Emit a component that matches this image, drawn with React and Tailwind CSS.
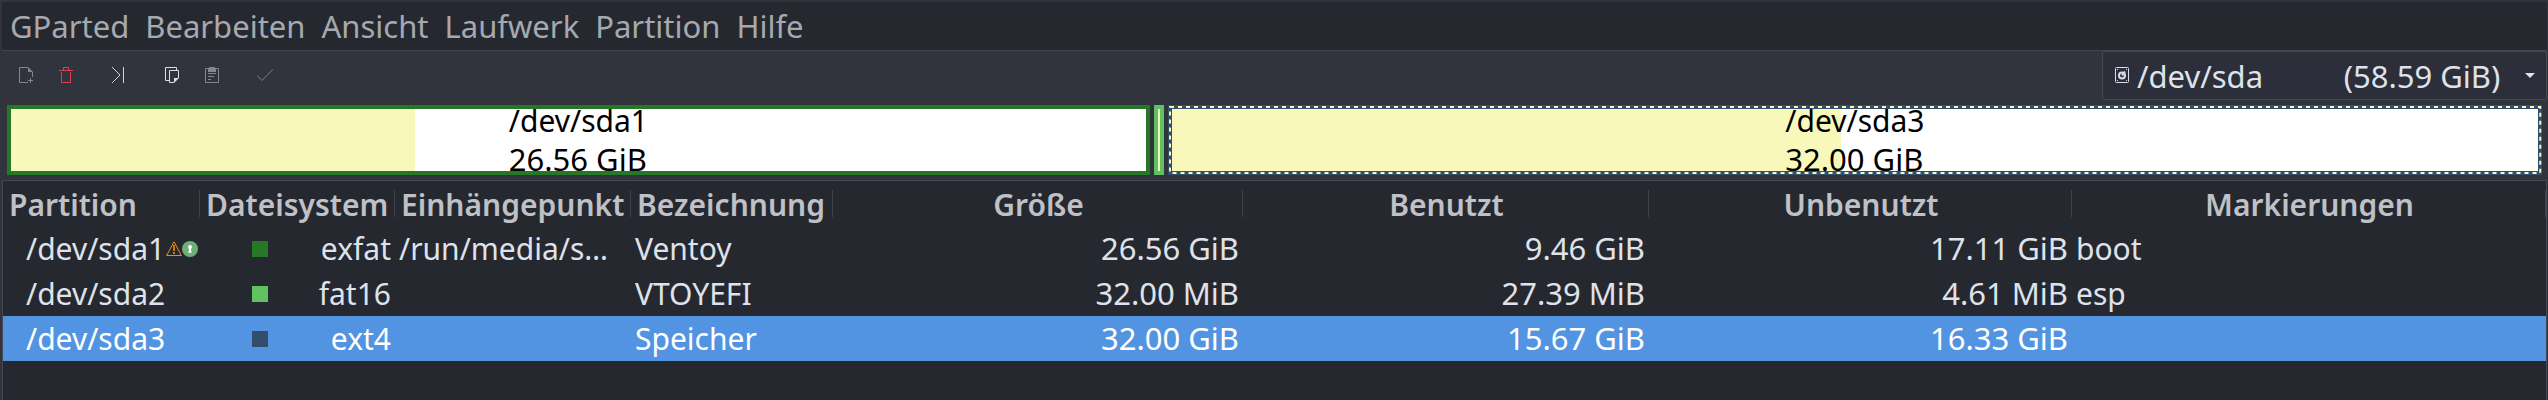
import { useState } from "react";

const MENU = ["GParted", "Bearbeiten", "Ansicht", "Laufwerk", "Partition", "Hilfe"];

const PARTITIONS = [
  { name: "/dev/sda1", fs: "exfat", swatch: "bg-[#267726]", mount: "/run/media/s…", label: "Ventoy", size: "26.56 GiB", used: "9.46 GiB", unused: "17.11 GiB", flags: "boot", mounted: true },
  { name: "/dev/sda2", fs: "fat16", swatch: "bg-[#5fc262]", mount: "", label: "VTOYEFI", size: "32.00 MiB", used: "27.39 MiB", unused: "4.61 MiB", flags: "esp" },
  { name: "/dev/sda3", fs: "ext4", swatch: "bg-[#314e6c]", mount: "", label: "Speicher", size: "32.00 GiB", used: "15.67 GiB", unused: "16.33 GiB", flags: "" },
];

const COLUMNS = [
  { title: "Partition", width: "w-[197px]", align: "justify-start" },
  { title: "Dateisystem", width: "w-[195px]", align: "justify-start" },
  { title: "Einhängepunkt", width: "w-[236px]", align: "justify-start" },
  { title: "Bezeichnung", width: "w-[202px]", align: "justify-start" },
  { title: "Größe", width: "w-[410px]", align: "justify-center" },
  { title: "Benutzt", width: "w-[406px]", align: "justify-center" },
  { title: "Unbenutzt", width: "w-[423px]", align: "justify-center" },
  { title: "Markierungen", width: "", align: "justify-center" },
];

const Icon = ({ children, className = "" }) => (
  <svg viewBox="0 0 16 16" className={`w-4 h-4 shrink-0 ${className}`} fill="none" stroke="currentColor" aria-hidden="true">
    {children}
  </svg>
);

const NewIcon = () => (
  <Icon className="text-[#85878d]">
    <path d="M10 .5H1.5v15H10M14.5 5v5M12.5 11v5M10 13.5h5" />
    <path d="M10 0l5 5h-5z" fill="currentColor" stroke="none" />
  </Icon>
);

const TrashIcon = () => (
  <Icon className="text-[#d8434f]">
    <path d="M1 3.5h14M5.5 3V.5h5V3M3.5 5v10.5h9V5" />
  </Icon>
);

const ApplyToEndIcon = () => (
  <Icon className="text-[#d0d5e0]">
    <path d="M1 0l8 8-8 8M12.5 0v16" />
  </Icon>
);

const CopyIcon = () => (
  <Icon className="text-[#d9deea]">
    <path d="M5 13.5H1.5V.5h11V3M10 15.5H5.5v-12h9V11" />
    <path d="M10 16v-5h5z" fill="currentColor" stroke="none" />
  </Icon>
);

const PasteIcon = () => (
  <Icon className="text-[#85878d]">
    <path d="M4 1.5H1.5v14h13v-14H12M4 6.5h8M4 9.5h6M4 12.5h3" />
    <path d="M4 1h1V0h6v1h1v4H4z" fill="currentColor" stroke="none" />
  </Icon>
);

const CheckIcon = () => (
  <Icon className="text-[#7f8188]">
    <path d="M0 8.5l5 5L16 2.2" />
  </Icon>
);

const DriveIcon = () => (
  <Icon className="text-[#d9deea]">
    <rect x="1.5" y=".5" width="13" height="15" rx="1" />
    <circle cx="8" cy="8.5" r="3" strokeWidth="2" />
    <path d="M8 8.5l3-4" strokeWidth="2" />
    <path d="M3 2.5h1M12 2.5h1M3 13.5h1M12 13.5h1" />
  </Icon>
);

const WarningIcon = () => (
  <Icon className="text-[#f28c0a]">
    <path d="M8 .8L15.4 14.5H.6z" strokeLinejoin="round" />
    <path d="M8 4v6M8 11v2" strokeWidth="1.6" />
  </Icon>
);

const LockedIcon = () => (
  <Icon>
    <circle cx="8" cy="8" r="8" fill="#6fae76" stroke="none" />
    <circle cx="8" cy="6" r="2" fill="#fff" stroke="none" />
    <path d="M8 6v5.5" stroke="#fff" strokeWidth="2" />
    <path d="M6 11h4" stroke="#fff" />
  </Icon>
);

const ToolButton = ({ label, children }) => (
  <button type="button" aria-label={label} className="w-10 h-full flex items-center justify-center">
    {children}
  </button>
);

// One segment of the disk map; the used share is filled from the left
const Segment = ({ name, size, used, className, selected }) => (
  <div className={`relative grid min-w-0 h-[70px] border-4 bg-white ${className}`}>
    <div className="[grid-area:1/1] bg-[#f8f8ba]" style={{ width: `${used}%` }} />
    {selected && (
      <svg className="absolute -inset-1 w-[calc(100%+8px)] h-[70px]" aria-hidden="true">
        <rect x="2" y="2" className="w-[calc(100%-4px)] h-[66px]" fill="none" stroke="#f8f8ba" strokeWidth="2" strokeDasharray="4 4" />
      </svg>
    )}
    {name && (
      <div className="relative [grid-area:1/1] h-[62px] flex items-center justify-center text-black leading-[39px] whitespace-nowrap">
        <div>
          <p>{name}</p>
          <p className="text-[31px]">{size}</p>
        </div>
      </div>
    )}
  </div>
);

const App = () => {
  const [selected, setSelected] = useState("/dev/sda3");

  return (
    <div className="min-h-screen flex flex-col pt-0.5 pl-0.5 pr-px bg-[#32343d] text-[#dfe2ea] text-[30px] font-['Noto_Sans',sans-serif]">
      <nav className="flex h-[49px] pt-px bg-[#262830] border-b border-[#43454d] text-[#a6a9af] text-[31px]">
        {MENU.map((item) => (
          <button key={item} type="button" className="px-2">
            {item}
          </button>
        ))}
      </nav>

      <div className="flex items-center justify-between h-[49px]">
        <div className="flex items-center h-full pl-1 pb-px">
          <ToolButton label="Neu"><NewIcon /></ToolButton>
          <ToolButton label="Löschen"><TrashIcon /></ToolButton>
          <span className="w-[13px]" />
          <ToolButton label="Größe ändern"><ApplyToEndIcon /></ToolButton>
          <span className="w-[13px]" />
          <ToolButton label="Kopieren"><CopyIcon /></ToolButton>
          <ToolButton label="Einfügen"><PasteIcon /></ToolButton>
          <span className="w-[13px]" />
          <ToolButton label="Anwenden"><CheckIcon /></ToolButton>
        </div>

        {/* Device chooser */}
        <div className="relative w-[445px] h-full">
          <select aria-label="Laufwerk" className="appearance-none w-full h-full pt-px pl-[34px] bg-[#2c2e39] border border-[#474952] rounded-xs text-[31px]">
            <option>{"/dev/sda" + "\u00a0".repeat(10) + "(58.59 GiB)"}</option>
          </select>
          <span className="absolute left-3 inset-y-0 pb-px flex items-center pointer-events-none">
            <DriveIcon />
          </span>
          <svg viewBox="0 0 10 5" className="absolute right-3 top-[22px] w-2.5 h-[5px] pointer-events-none" aria-hidden="true">
            <path d="M0 0h10L5 5z" fill="#dfe2ea" />
          </svg>
        </div>
      </div>

      {/* Disk map */}
      <div className="flex gap-1 py-[5px] px-[5px]">
        <Segment name="/dev/sda1" size="26.56 GiB" used={35.6} className="grow-[1142] basis-0 border-[#267726]" />
        <Segment used={100} className="w-2.5 border-[#5fc262]" />
        <Segment name="/dev/sda3" size="32.00 GiB" used={49} selected className="grow-[1375] basis-0 border-[#314e6c]" />
      </div>

      <div className="grow bg-[#262830] border-x border-t border-[#474952]">
        <table className="w-full table-fixed border-collapse whitespace-nowrap">
          <thead>
            <tr className="h-[45px] text-[#bfc1c6]">
              {COLUMNS.map((col) => (
                <th key={col.title} scope="col" className={`p-0 font-semibold ${col.width}`}>
                  <span className={`flex items-center h-[27px] pt-0.5 pl-1.5 pr-1 border-r last:border-r border-[#41434b] ${col.align}`}>
                    {col.title}
                  </span>
                </th>
              ))}
            </tr>
          </thead>
          <tbody>
            {PARTITIONS.map((p) => (
              <tr
                key={p.name}
                onClick={() => setSelected(p.name)}
                className={`h-[45px] leading-[45px] ${selected === p.name ? "bg-[#5294e2] text-white" : ""}`}
              >
                <td className="p-0 pl-[23px]">
                  <span className="flex items-center justify-between">
                    {p.name}
                    {p.mounted && (
                      <span className="flex pr-0.5">
                        <WarningIcon />
                        <LockedIcon />
                      </span>
                    )}
                  </span>
                </td>
                <td className="p-0">
                  <span className="flex items-center justify-between pl-[52px] pr-1">
                    <span className={`w-4 h-4 ${p.swatch}`} />
                    {p.fs}
                  </span>
                </td>
                <td className="py-0 px-1">{p.mount}</td>
                <td className="py-0 px-1">{p.label}</td>
                <td className="py-0 px-1 text-right text-[31px]">{p.size}</td>
                <td className="py-0 px-1 text-right text-[31px]">{p.used}</td>
                <td className="py-0 px-1 text-right text-[31px]">{p.unused}</td>
                <td className="py-0 px-1">{p.flags}</td>
              </tr>
            ))}
          </tbody>
        </table>
      </div>
    </div>
  );
};

export default App;
